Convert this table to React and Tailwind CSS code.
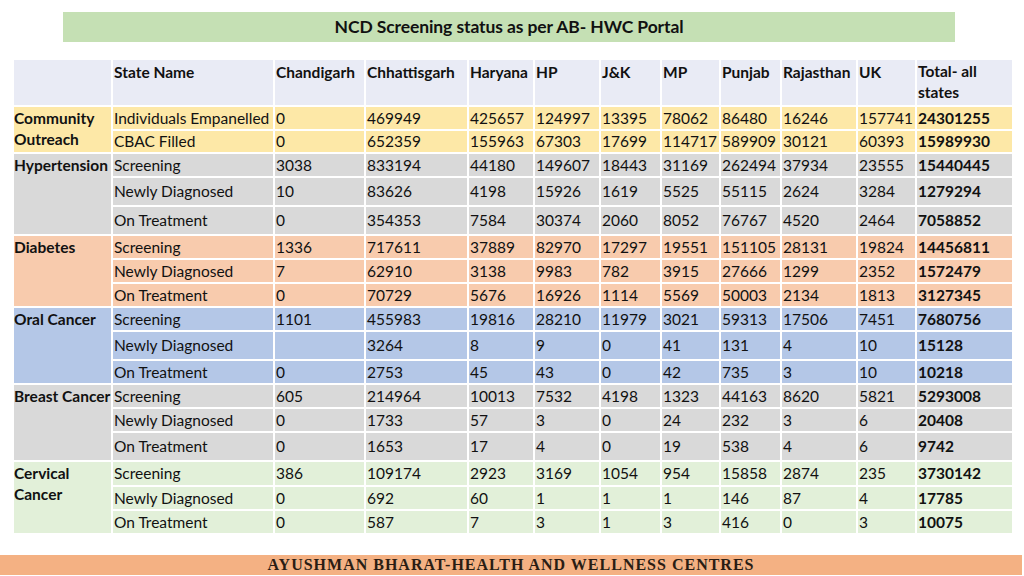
import React from "react";

const STATES = [
  "Chandigarh",
  "Chhattisgarh",
  "Haryana",
  "HP",
  "J&K",
  "MP",
  "Punjab",
  "Rajasthan",
  "UK",
];

// group label, row background, [row height, label, values...]
const GROUPS = [
  {
    name: ["Community", "Outreach"],
    bg: "bg-[#fde8a7]",
    rows: [
      [24, "Individuals Empanelled", ["0", "469949", "425657", "124997", "13395", "78062", "86480", "16246", "157741", "24301255"]],
      [23, "CBAC Filled", ["0", "652359", "155963", "67303", "17699", "114717", "589909", "30121", "60393", "15989930"]],
    ],
  },
  {
    name: ["Hypertension"],
    bg: "bg-[#d9d9d9]",
    rows: [
      [24, "Screening", ["3038", "833194", "44180", "149607", "18443", "31169", "262494", "37934", "23555", "15440445"]],
      [29, "Newly Diagnosed", ["10", "83626", "4198", "15926", "1619", "5525", "55115", "2624", "3284", "1279294"]],
      [29, "On Treatment", ["0", "354353", "7584", "30374", "2060", "8052", "76767", "4520", "2464", "7058852"]],
    ],
  },
  {
    name: ["Diabetes"],
    bg: "bg-[#f8cbad]",
    rows: [
      [24, "Screening", ["1336", "717611", "37889", "82970", "17297", "19551", "151105", "28131", "19824", "14456811"]],
      [24, "Newly Diagnosed", ["7", "62910", "3138", "9983", "782", "3915", "27666", "1299", "2352", "1572479"]],
      [24, "On Treatment", ["0", "70729", "5676", "16926", "1114", "5569", "50003", "2134", "1813", "3127345"]],
    ],
  },
  {
    name: ["Oral Cancer"],
    bg: "bg-[#b4c7e7]",
    rows: [
      [24, "Screening", ["1101", "455983", "19816", "28210", "11979", "3021", "59313", "17506", "7451", "7680756"]],
      [29, "Newly Diagnosed", ["", "3264", "8", "9", "0", "41", "131", "4", "10", "15128"]],
      [24, "On Treatment", ["0", "2753", "45", "43", "0", "42", "735", "3", "10", "10218"]],
    ],
  },
  {
    name: ["Breast Cancer"],
    bg: "bg-[#d9d9d9]",
    rows: [
      [24, "Screening", ["605", "214964", "10013", "7532", "4198", "1323", "44163", "8620", "5821", "5293008"]],
      [24, "Newly Diagnosed", ["0", "1733", "57", "3", "0", "24", "232", "3", "6", "20408"]],
      [29, "On Treatment", ["0", "1653", "17", "4", "0", "19", "538", "4", "6", "9742"]],
    ],
  },
  {
    name: ["Cervical", "Cancer"],
    bg: "bg-[#e2f0d9]",
    rows: [
      [25, "Screening", ["386", "109174", "2923", "3169", "1054", "954", "15858", "2874", "235", "3730142"]],
      [24, "Newly Diagnosed", ["0", "692", "60", "1", "1", "1", "146", "87", "4", "17785"]],
      [24, "On Treatment", ["0", "587", "7", "3", "1", "3", "416", "0", "3", "10075"]],
    ],
  },
];

const HEIGHTS = {
  23: "h-[23px]",
  24: "h-[24px]",
  25: "h-[25px]",
  29: "h-[29px]",
};

export default function App() {
  return (
    <div
      className="w-[1024px] h-[576px] bg-white flex flex-col text-[#111] overflow-hidden"
      style={{ fontFamily: "Lato, 'Open Sans', sans-serif" }}
    >
      {/* TITLE */}
      <div className="mt-3 ml-[63px] w-[892px] h-[30px] bg-[#c5e0b4] flex items-center justify-center">
        <span className="font-bold text-[17.5px] tracking-[-0.1px]">
          NCD Screening status as per AB- HWC Portal
        </span>
      </div>

      {/* TABLE */}
      <div className="mt-4 ml-3">
        <table className="table-fixed border-collapse text-[15.5px] leading-[19px]">
          <colgroup>
            <col className="w-[99px]" />
            <col className="w-[162px]" />
            <col className="w-[91px]" />
            <col className="w-[103px]" />
            <col className="w-[66px]" />
            <col className="w-[66px]" />
            <col className="w-[61px]" />
            <col className="w-[59px]" />
            <col className="w-[61px]" />
            <col className="w-[76px]" />
            <col className="w-[59px]" />
            <col className="w-[97px]" />
          </colgroup>
          <thead>
            <tr className="h-[47px] bg-[#e9ebf5] font-bold align-top">
              <th className="border-2 border-white" />
              <th className="border-2 border-white text-left font-bold pl-px pt-[3px]">
                State Name
              </th>
              {STATES.map((s) => (
                <th key={s} className="border-2 border-white text-left font-bold pl-px pt-[3px] whitespace-nowrap">
                  {s}
                </th>
              ))}
              <th className="border-2 border-white text-left font-bold pl-px pt-px leading-[21px]">
                Total- all
                <br />
                states
              </th>
            </tr>
          </thead>
          <tbody>
            {GROUPS.map((g) =>
              g.rows.map(([h, label, vals], i) => (
                <tr key={g.name.join() + label} className={`${g.bg} ${HEIGHTS[h]}`}>
                  {i === 0 && (
                    <td
                      rowSpan={g.rows.length}
                      className="border-2 border-white align-top font-bold pl-0 pt-px leading-[21px] whitespace-nowrap"
                    >
                      {g.name.map((n) => (
                        <div key={n}>{n}</div>
                      ))}
                    </td>
                  )}
                  <td className="border-2 border-white pl-px whitespace-nowrap">{label}</td>
                  {vals.map((v, j) => (
                    <td
                      key={j}
                      className={`border-2 border-white pl-px whitespace-nowrap ${
                        j === vals.length - 1 ? "font-bold" : ""
                      }`}
                    >
                      {v}
                    </td>
                  ))}
                </tr>
              ))
            )}
          </tbody>
        </table>
      </div>

      {/* FOOTER */}
      <div className="mt-auto mb-[1px] w-[1022px] h-[20px] bg-[#f4b183] flex items-center justify-center">
        <span
          className="font-bold text-[16px] text-[#2a1d14] tracking-[1px] leading-none"
          style={{ fontFamily: "'Liberation Serif', serif" }}
        >
          AYUSHMAN BHARAT-HEALTH AND WELLNESS CENTRES
        </span>
      </div>
    </div>
  );
}
